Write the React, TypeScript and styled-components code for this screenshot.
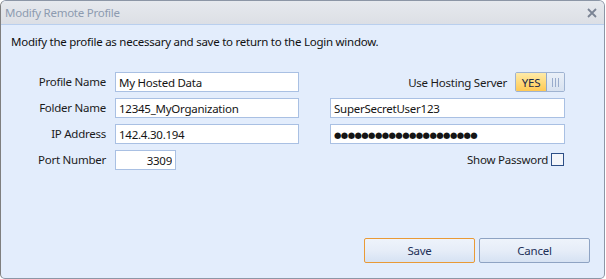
import React from "react";
import styled, { createGlobalStyle } from "styled-components";

const Global = createGlobalStyle`
  html, body { margin: 0; padding: 0; background: #ffffff; }
  * { box-sizing: border-box; }
  body { font-family: "Noto Sans", "DejaVu Sans", sans-serif; font-size: 11.5px; letter-spacing: -0.25px; }
`;

const Window = styled.div`
  width: 605px;
  height: 279px;
  border: 1px solid #8c96a6;
  border-left-color: #7f7f7f;
  border-radius: 6px 6px 5px 5px;
  background: #e3edfc;
  display: flex;
  flex-direction: column;
  overflow: hidden;
`;

const TitleBar = styled.div`
  height: 24px;
  flex: none;
  display: flex;
  align-items: center;
  justify-content: space-between;
  padding: 0 7px 0 4px;
  background: linear-gradient(#e6e9ee, #dcdfe5);
  border-bottom: 1px solid #b9cfee;
`;

const Title = styled.span`
  color: #8d9bb0;
  font-size: 11.5px;
`;

const CloseIcon = styled.svg`
  width: 10px;
  height: 10px;
  margin-top: 1px;
`;

const Body = styled.div`
  flex: 1;
  display: flex;
  flex-direction: column;
  padding: 9px 14px 15px 10px;
`;

const Instruction = styled.div`
  color: #111;
  font-size: 11.5px;
  line-height: 16px;
`;

const FormGrid = styled.div`
  margin-top: 22px;
  display: grid;
  grid-template-columns: 104px 215px 235px;
  grid-auto-rows: 20px;
  row-gap: 6px;
`;

const Label = styled.label`
  text-align: right;
  padding-right: 9px;
  line-height: 20px;
  color: #1b1b1b;
  font-size: 11.5px;
  white-space: nowrap;
`;

const Field = styled.input<{ $w: number; $right?: boolean; $dots?: boolean }>`
  width: ${(p) => p.$w}px;
  height: 20px;
  border: 1px solid #a9c0e3;
  background: #ffffff;
  padding: 0 3px;
  font-family: "Noto Sans", "DejaVu Sans", sans-serif;
  font-size: ${(p) => (p.$dots ? "8.5px" : "11.5px")};
  letter-spacing: ${(p) => (p.$dots ? "-0.6px" : "-0.25px")};
  color: #141414;
  text-align: ${(p) => (p.$right ? "right" : "left")};
  outline: none;
  margin: 0;
`;

const RightCell = styled.div`
  display: flex;
  align-items: center;
  justify-content: flex-end;
  gap: 8px;
  color: #1b1b1b;
  font-size: 11.5px;
`;

const Toggle = styled.div`
  display: flex;
  width: 50px;
  height: 20px;
  border: 1px solid #9fb3d1;
  border-radius: 2px;
  overflow: hidden;
`;

const ToggleOn = styled.div`
  width: 31px;
  display: flex;
  align-items: center;
  justify-content: center;
  background: linear-gradient(#fdeaa9, #ffd978 55%, #ffc955);
  border-right: 1px solid #93a8c9;
  color: #1d2b48;
  font-size: 11.5px;
`;

const ToggleGrip = styled.div`
  flex: 1;
  display: flex;
  align-items: center;
  justify-content: center;
  gap: 2px;
  background: linear-gradient(#eaf0f8, #d8e2f0);
`;

const GripLine = styled.span`
  width: 1px;
  height: 9px;
  background: #9aaccc;
`;

const CheckRow = styled.div`
  display: flex;
  align-items: center;
  justify-content: flex-end;
  gap: 3px;
  color: #1b1b1b;
  font-size: 11.5px;
  margin-right: 1px;
  padding-bottom: 2px;
`;

const Checkbox = styled.span`
  width: 13px;
  height: 13px;
  border: 1px solid #2d4f86;
  background: #f4f6fa;
`;

const Footer = styled.div`
  margin-top: auto;
  display: flex;
  justify-content: flex-end;
  gap: 4px;
`;

const Button = styled.button<{ $primary?: boolean }>`
  width: 111px;
  height: 25px;
  border: 1px solid ${(p) => (p.$primary ? "#e99a36" : "#8ea3c3")};
  border-radius: 2px;
  background: linear-gradient(#eef3fb, #e6edf8 50%, #d6e2f3);
  color: #1d3058;
  font-family: "Noto Sans", "DejaVu Sans", sans-serif;
  font-size: 11.5px;
  letter-spacing: -0.25px;
  padding: 0;
`;

export default function App() {
  return (
    <>
      <Global />
      <Window>
        <TitleBar>
          <Title>Modify Remote Profile</Title>
          <CloseIcon viewBox="0 0 10 10">
            <path d="M1 1 L9 9 M9 1 L1 9" stroke="#7b8494" strokeWidth="1.8" />
          </CloseIcon>
        </TitleBar>
        <Body>
          <Instruction>
            Modify the profile as necessary and save to return to the Login window.
          </Instruction>
          <FormGrid>
            <Label>Profile Name</Label>
            <div>
              <Field $w={184} readOnly defaultValue="My Hosted Data" />
            </div>
            <RightCell>
              <span>Use Hosting Server</span>
              <Toggle>
                <ToggleOn>YES</ToggleOn>
                <ToggleGrip>
                  <GripLine />
                  <GripLine />
                  <GripLine />
                </ToggleGrip>
              </Toggle>
            </RightCell>

            <Label>Folder Name</Label>
            <div>
              <Field $w={184} readOnly defaultValue="12345_MyOrganization" />
            </div>
            <div>
              <Field $w={235} readOnly defaultValue="SuperSecretUser123" />
            </div>

            <Label>IP Address</Label>
            <div>
              <Field $w={184} readOnly defaultValue="142.4.30.194" />
            </div>
            <div>
              <Field $w={235} $dots readOnly defaultValue={"●".repeat(21)} />
            </div>

            <Label>Port Number</Label>
            <div>
              <Field $w={61} $right readOnly defaultValue="3309" />
            </div>
            <CheckRow>
              <span>Show Password</span>
              <Checkbox />
            </CheckRow>
          </FormGrid>
          <Footer>
            <Button $primary>Save</Button>
            <Button>Cancel</Button>
          </Footer>
        </Body>
      </Window>
    </>
  );
}
